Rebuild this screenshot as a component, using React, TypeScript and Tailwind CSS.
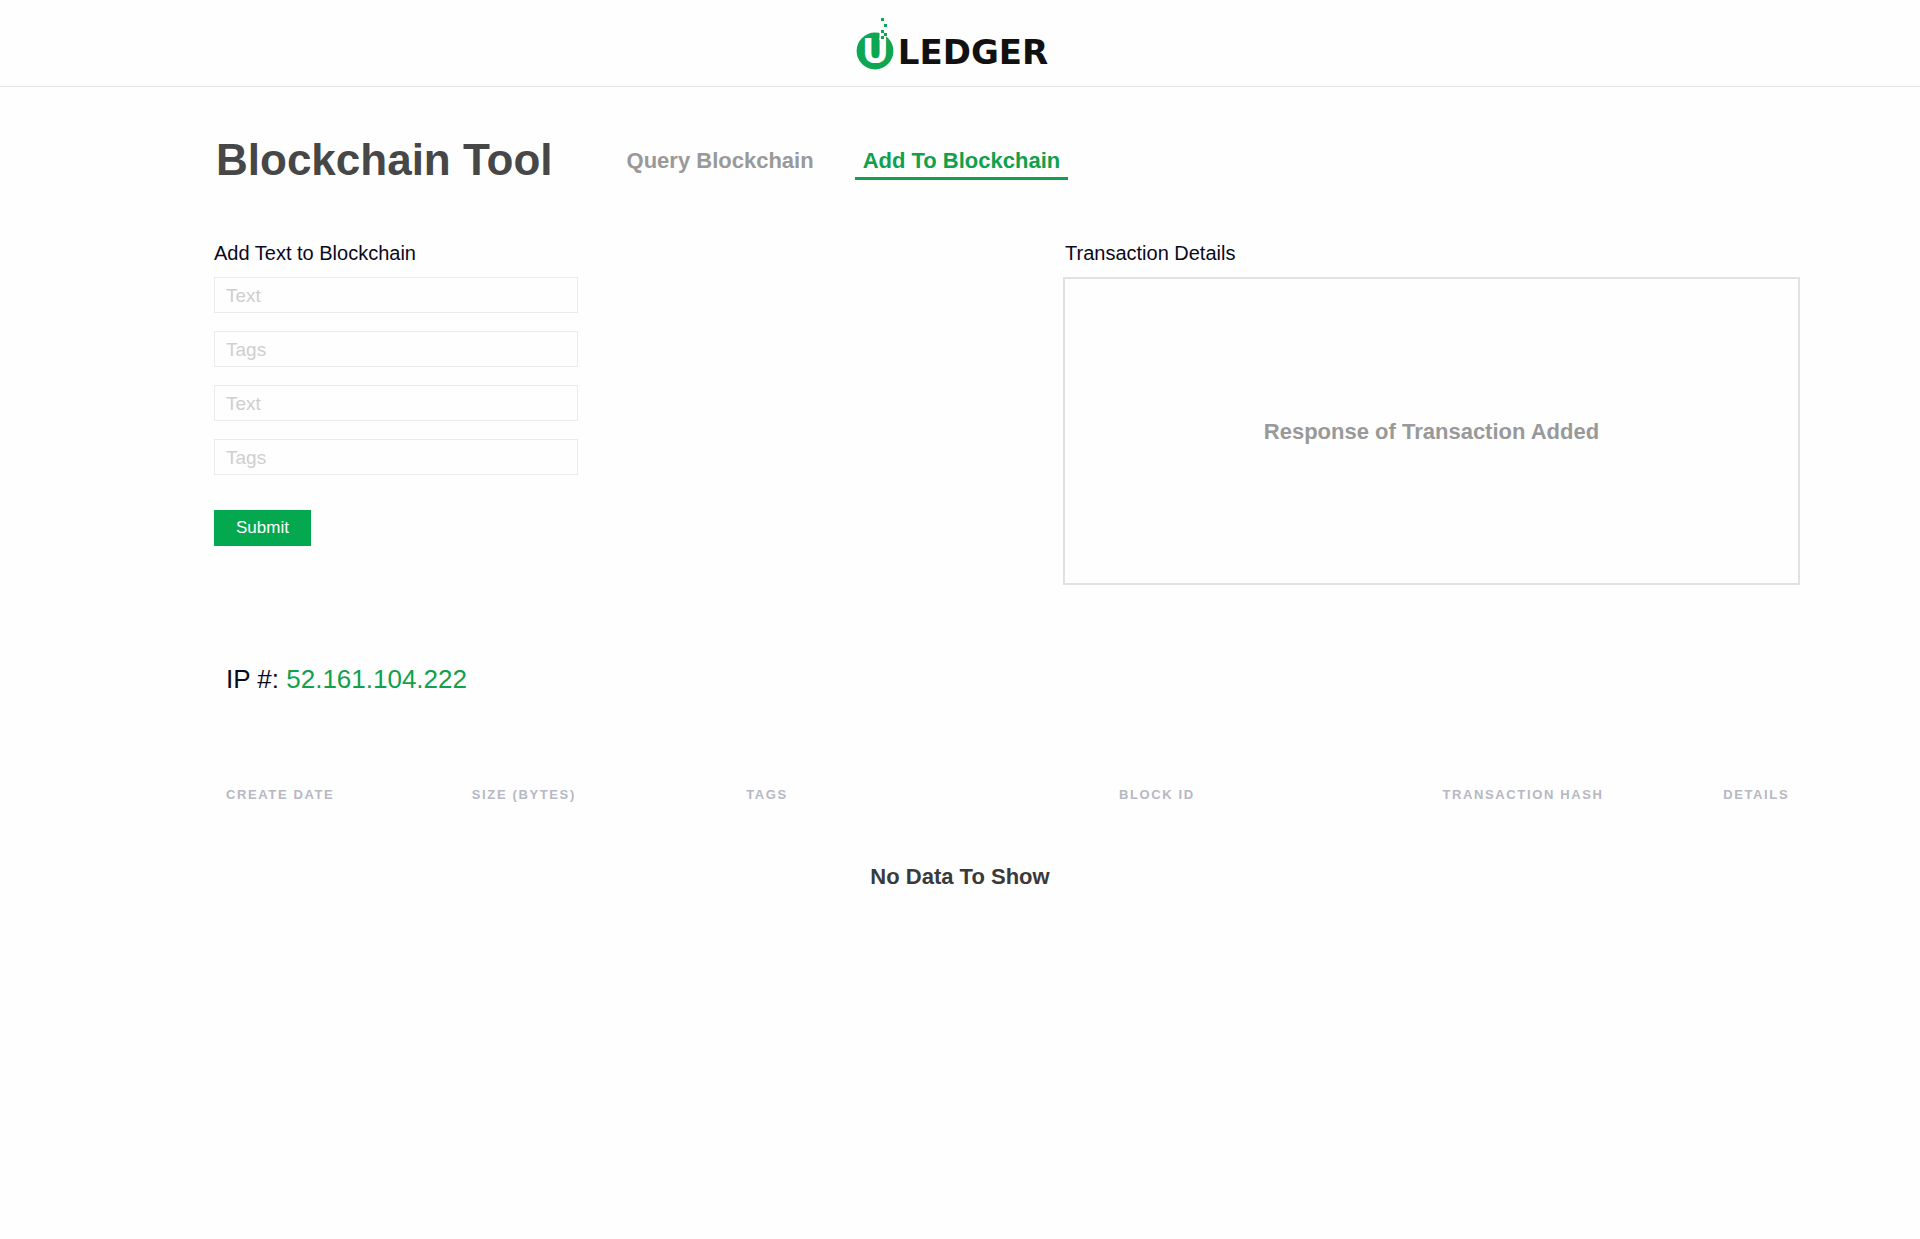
import React from "react";

const fields = [
  { id: "text-1", label: "Text" },
  { id: "tags-1", label: "Tags" },
  { id: "text-2", label: "Text" },
  { id: "tags-2", label: "Tags" },
];

const columns = [
  { name: "Create Date", width: "w-[15.5%]" },
  { name: "Size (Bytes)", width: "w-[17.3%]" },
  { name: "Tags", width: "w-[23.5%]" },
  { name: "Block ID", width: "w-[20.4%]" },
  { name: "Transaction Hash", width: "w-[17.7%]" },
  { name: "Details", width: "" },
];

function Logo() {
  return (
    <a href="#" aria-label="ULedger" className="flex items-end">
      <svg width="42" height="54" viewBox="0 0 42 54" fill="#0ea650">
        <circle cx="19" cy="35" r="18.4" />
        <text
          x="19.5"
          y="47"
          textAnchor="middle"
          fill="#fff"
          fontFamily="DejaVu Sans"
          fontWeight="700"
          fontSize="33"
        >
          U
        </text>
        <rect x="23.5" y="15" width="6.5" height="9" fill="#fff" />
        <rect x="25" y="2" width="3" height="3" />
        <rect x="28" y="8" width="3" height="3" />
        <rect x="25" y="14" width="3" height="3" />
        <rect x="28" y="17" width="3" height="3" />
        <rect x="25" y="20" width="3" height="3" />
      </svg>
      <span className="font-['DejaVu_Sans'] text-[34px] leading-9 font-bold text-[#111]">LEDGER</span>
    </a>
  );
}

export default function App() {
  return (
    <div className="min-h-screen bg-[#fefefe] font-['Liberation_Sans',Arial,sans-serif] text-[#0b0920]">
      <header className="flex h-[87px] items-start justify-center border-b border-[#e6e6e6] pt-4 pr-4">
        <Logo />
      </header>

      <main className="pt-[41px]">
        <div className="flex items-center pl-[216px]">
          <h1 className="text-[44px] leading-[64px] font-bold text-[#474747]">Blockchain Tool</h1>
          <nav className="ml-[66px] flex gap-[33px] pt-2 text-[22px] leading-6 font-bold">
            <a href="#query" className="border-b-[3px] border-transparent px-2 pb-1 text-[#999]">
              Query Blockchain
            </a>
            <a href="#add" aria-current="page" className="border-b-[3px] border-[#0fa14b] px-2 pb-1 text-[#0fa14b]">
              Add To Blockchain
            </a>
          </nav>
        </div>

        <div className="flex justify-between pt-[47px] pr-[120px] pl-[214px]">
          <form className="w-[364px]" onSubmit={(e) => e.preventDefault()}>
            <h2 className="pb-[10px] text-xl leading-7">Add Text to Blockchain</h2>
            <div className="flex flex-col gap-[18px]">
              {fields.map((f) => (
                <input
                  key={f.id}
                  id={f.id}
                  aria-label={f.label}
                  placeholder={f.label}
                  className="h-9 w-full border border-[#ebebeb] bg-transparent px-[11px] pt-[2px] text-[19px] outline-none placeholder:text-[#cfcfcf]"
                />
              ))}
            </div>
            <button type="submit" className="mt-[35px] h-9 w-[97px] bg-[#04a84f] text-[17px] text-white">
              Submit
            </button>
          </form>

          <section className="flex w-[737px] flex-col">
            <h2 className="pb-[10px] pl-[2px] text-xl leading-7">Transaction Details</h2>
            <div className="flex h-[308px] items-center justify-center border-2 border-[#e2e2e2] text-[22px] font-bold text-[#999]">
              Response of Transaction Added
            </div>
          </section>
        </div>

        <p className="pt-[76px] pl-[226px] text-[26px] leading-9">
          IP #: <span className="text-[#0fa14b]">52.161.104.222</span>
        </p>

        <div className="pt-[88px] pr-[120px] pl-[214px]">
          <table className="w-full table-fixed">
            <thead>
              <tr>
                {columns.map((c) => (
                  <th
                    key={c.name}
                    scope="col"
                    className={`${c.width} px-3 text-left text-[13px] leading-5 font-bold tracking-[0.125em] whitespace-nowrap text-[#b6b8c3] uppercase`}
                  >
                    {c.name}
                  </th>
                ))}
              </tr>
            </thead>
          </table>
        </div>

        <p className="pt-14 text-center text-[22px] leading-8 font-bold text-[#3a3a3a]">No Data To Show</p>
      </main>
    </div>
  );
}
